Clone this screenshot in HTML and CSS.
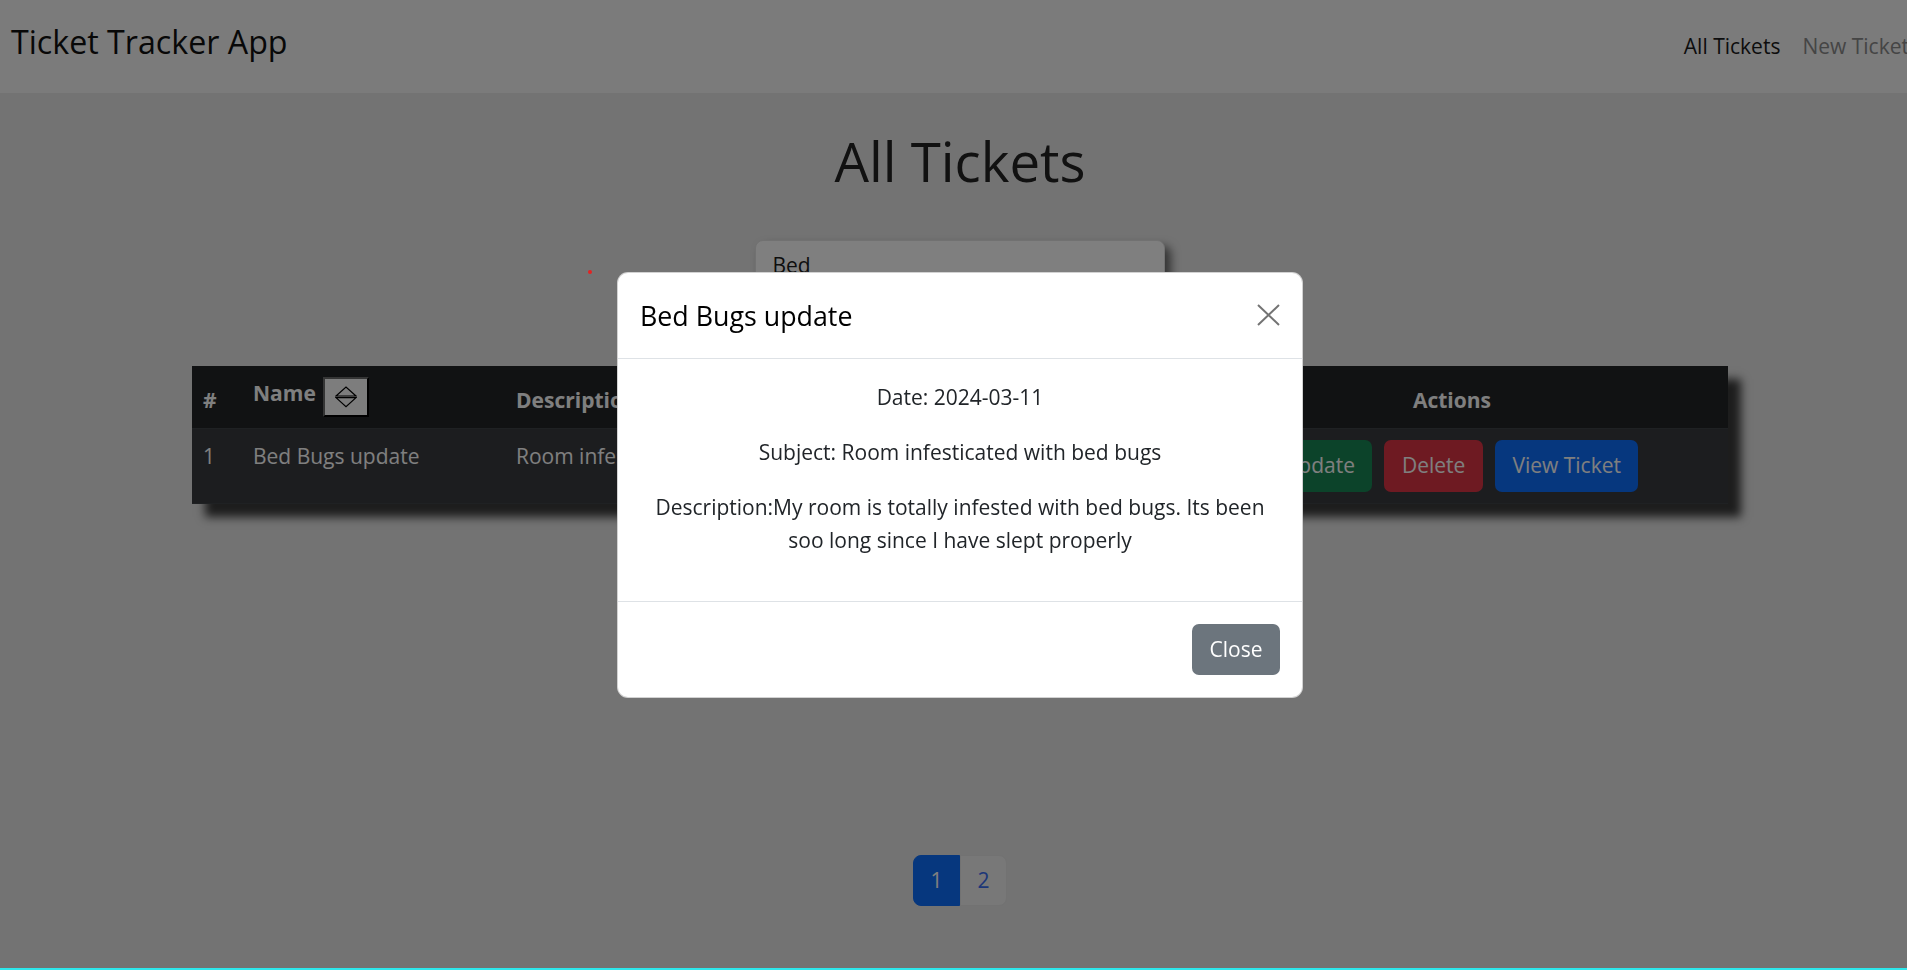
FILE: index.html
```html
<!DOCTYPE html>
<html lang="en">
<head>
<meta charset="utf-8">
<title>Ticket Tracker App</title>
<link rel="stylesheet" href="styles.css">
</head>
<body>
<div class="page">
  <nav class="navbar">
    <a class="brand" href="#">Ticket Tracker App</a>
    <ul class="nav-links">
      <li><a class="nav-link active" href="#">All Tickets</a></li>
      <li><a class="nav-link" href="#">New Ticket</a></li>
    </ul>
  </nav>

  <main class="main">
    <h1 class="page-title">All Tickets</h1>

    <div class="search">
      <input class="search-input" type="text" value="Bed">
    </div>

    <table class="tickets">
      <colgroup>
        <col class="c-num">
        <col class="c-name">
        <col class="c-desc">
        <col class="c-actions">
      </colgroup>
      <thead>
        <tr>
          <th>#</th>
          <th>
            <div class="th-sort">
              <span>Name</span>
              <button class="sort-btn" type="button" aria-label="Sort by name">
                <svg width="22" height="22" viewBox="0 0 22 22" aria-hidden="true">
                  <path d="M1 10 L11 1 L21 10 Z M1 11.6 L11 20.6 L21 11.6 Z" fill="none" stroke="#000" stroke-width="1.2" stroke-linejoin="miter"/>
                </svg>
              </button>
            </div>
          </th>
          <th>Description</th>
          <th class="th-center">Actions</th>
        </tr>
      </thead>
      <tbody>
        <tr>
          <td>1</td>
          <td>Bed Bugs update</td>
          <td class="td-desc">Room infesticated with bed bugs</td>
          <td>
            <div class="actions">
              <button class="btn btn-success" type="button">Update</button>
              <button class="btn btn-danger" type="button">Delete</button>
              <button class="btn btn-primary" type="button">View Ticket</button>
            </div>
          </td>
        </tr>
      </tbody>
    </table>

    <ul class="pagination">
      <li><a class="page-link active" href="#">1</a></li>
      <li><a class="page-link" href="#">2</a></li>
    </ul>
  </main>
</div>

<div class="backdrop"></div>

<div class="modal">
  <div class="modal-dialog">
    <div class="modal-header">
      <h5 class="modal-title">Bed Bugs update</h5>
      <button class="btn-close" type="button" aria-label="Close">
        <svg width="23" height="22" viewBox="0 0 23 22" aria-hidden="true">
          <path d="M1 1 L22 21 M22 1 L1 21" stroke="#000" stroke-opacity="0.55" stroke-width="2" fill="none"/>
        </svg>
      </button>
    </div>
    <div class="modal-body">
      <p>Date: 2024-03-11</p>
      <p>Subject: Room infesticated with bed bugs</p>
      <p>Description:My room is totally infested with bed bugs. Its been soo long since I have slept properly</p>
    </div>
    <div class="modal-footer">
      <button class="btn btn-secondary" type="button">Close</button>
    </div>
  </div>
  <span class="cursor-dot"></span>
</div>

<div class="screen-edge"></div>
</body>
</html>
```

FILE: styles.css
```css
html {
  width: 1920px;
  overflow: hidden;
}

body {
  margin: 0;
  width: 1920px;
  min-height: 970px;
  background: #e6e6e6;
  font-family: "Open Sans", "Noto Sans", sans-serif;
  font-size: 21px;
  line-height: 33px;
  color: #212529;
}

/* ---------- navbar ---------- */
.navbar {
  height: 93px;
  box-sizing: border-box;
  background: #f6f6f6;
  display: flex;
  align-items: center;
  justify-content: space-between;
  padding: 0 0 0 11px;
}

.brand {
  font-size: 32.2px;
  line-height: 1.5;
  color: #111;
  text-decoration: none;
  margin-bottom: 8px;
}

.nav-links {
  list-style: none;
  display: flex;
  margin: 0;
  padding: 0;
}

.nav-link {
  display: block;
  padding: 0 11px;
  font-size: 21px;
  line-height: 33px;
  color: #8a8a8a;
  text-decoration: none;
}

.nav-link.active {
  color: #1a1a1a;
}

/* ---------- main ---------- */
.page-title {
  margin: 36px 0 45px;
  font-size: 54.6px;
  font-weight: 500;
  line-height: 1.2;
  text-align: center;
  color: #222;
}

.search {
  display: flex;
  justify-content: center;
  margin-bottom: 75px;
}

.search-input {
  width: 410px;
  box-sizing: border-box;
  padding: 8.25px 16.5px;
  font: inherit;
  color: #1c1c1c;
  background: #fff;
  border: 1px solid #e2e2e2;
  border-radius: 8px;
  box-shadow: 6px 6px 10px rgba(0, 0, 0, 0.55);
  outline: none;
}

/* ---------- table ---------- */
.tickets {
  width: 1536px;
  margin: 0 auto;
  border-collapse: collapse;
  color: #fff;
  box-shadow: 13px 13px 9px rgba(0, 0, 0, 0.75);
}

.c-num { width: 50px; }
.c-name { width: 263px; }
.c-desc { width: 671px; }
.c-actions { width: 552px; }

.tickets th,
.tickets td {
  padding: 11px;
  text-align: left;
  border-bottom: 1px solid #3e4246;
}

.tickets thead th {
  background: #222427;
  vertical-align: bottom;
  font-weight: 700;
}

.tickets tbody td {
  background: #383a3e;
  vertical-align: top;
}

.tickets .td-desc {
  white-space: nowrap;
}

.tickets .th-center {
  text-align: center;
}

.th-sort {
  display: flex;
  align-items: flex-start;
  gap: 7px;
}

.sort-btn {
  width: 46px;
  height: 40px;
  padding: 0;
  box-sizing: border-box;
  background: #fafafa;
  border: 2px solid;
  border-color: #6a6a6a #000 #000 #6a6a6a;
  display: flex;
  align-items: center;
  justify-content: center;
}

.actions {
  display: flex;
  justify-content: center;
  gap: 12px;
}

.btn {
  font: inherit;
  color: #fff;
  padding: 8.25px 16.5px;
  border: 1px solid transparent;
  border-radius: 7px;
  cursor: pointer;
}

.btn-success { background: #198754; }
.btn-danger { background: #dc3545; }
.btn-primary { background: #0d6efd; }
.btn-secondary { background: #6c757d; }

/* ---------- pagination ---------- */
.pagination {
  list-style: none;
  display: flex;
  justify-content: center;
  margin: 351px 0 0;
  padding: 0;
}

.page-link {
  display: block;
  padding: 8.25px 16.5px;
  border: 1px solid #e4e4e4;
  background: #f0f0f0;
  color: #3a6ff0;
  text-decoration: none;
}

.pagination li:first-child .page-link {
  border-radius: 8px 0 0 8px;
}

.pagination li:last-child .page-link {
  border-radius: 0 8px 8px 0;
}

.page-link.active {
  background: #0d6efd;
  border-color: #0d6efd;
  color: #fff;
}

/* ---------- modal ---------- */
.backdrop {
  position: fixed;
  left: 0;
  top: 0;
  width: 1920px;
  height: 100vh;
  background: rgba(0, 0, 0, 0.5);
}

.modal {
  position: fixed;
  left: 0;
  top: 0;
  width: 1920px;
  height: 100vh;
  display: flex;
  align-items: center;
  justify-content: center;
}

.modal-dialog {
  width: 686px;
  box-sizing: border-box;
  background: #fff;
  border: 1px solid rgba(0, 0, 0, 0.175);
  border-radius: 11px;
}

.modal-header {
  display: flex;
  align-items: center;
  justify-content: space-between;
  padding: 22px;
  border-bottom: 1px solid #dee2e6;
}

.modal-title {
  margin: 0;
  font-size: 26.8px;
  font-weight: 500;
  line-height: 41px;
  color: #000;
}

.btn-close {
  width: 23px;
  height: 22px;
  padding: 0;
  border: 0;
  background: transparent;
  display: flex;
}

.modal-body {
  padding: 22px;
  text-align: center;
}

.modal-body p {
  margin: 0 0 22px;
}

.modal-footer {
  display: flex;
  justify-content: flex-end;
  padding: 16.5px;
  border-top: 1px solid #dee2e6;
}

.modal-footer .btn {
  margin: 5.5px;
}

.cursor-dot {
  position: absolute;
  left: 588px;
  top: 270px;
  width: 4px;
  height: 4px;
  border-radius: 50%;
  background: #e52222;
}

.screen-edge {
  position: fixed;
  left: 0;
  bottom: 0;
  width: 1920px;
  height: 2px;
  background: #2de8ec;
}
```
